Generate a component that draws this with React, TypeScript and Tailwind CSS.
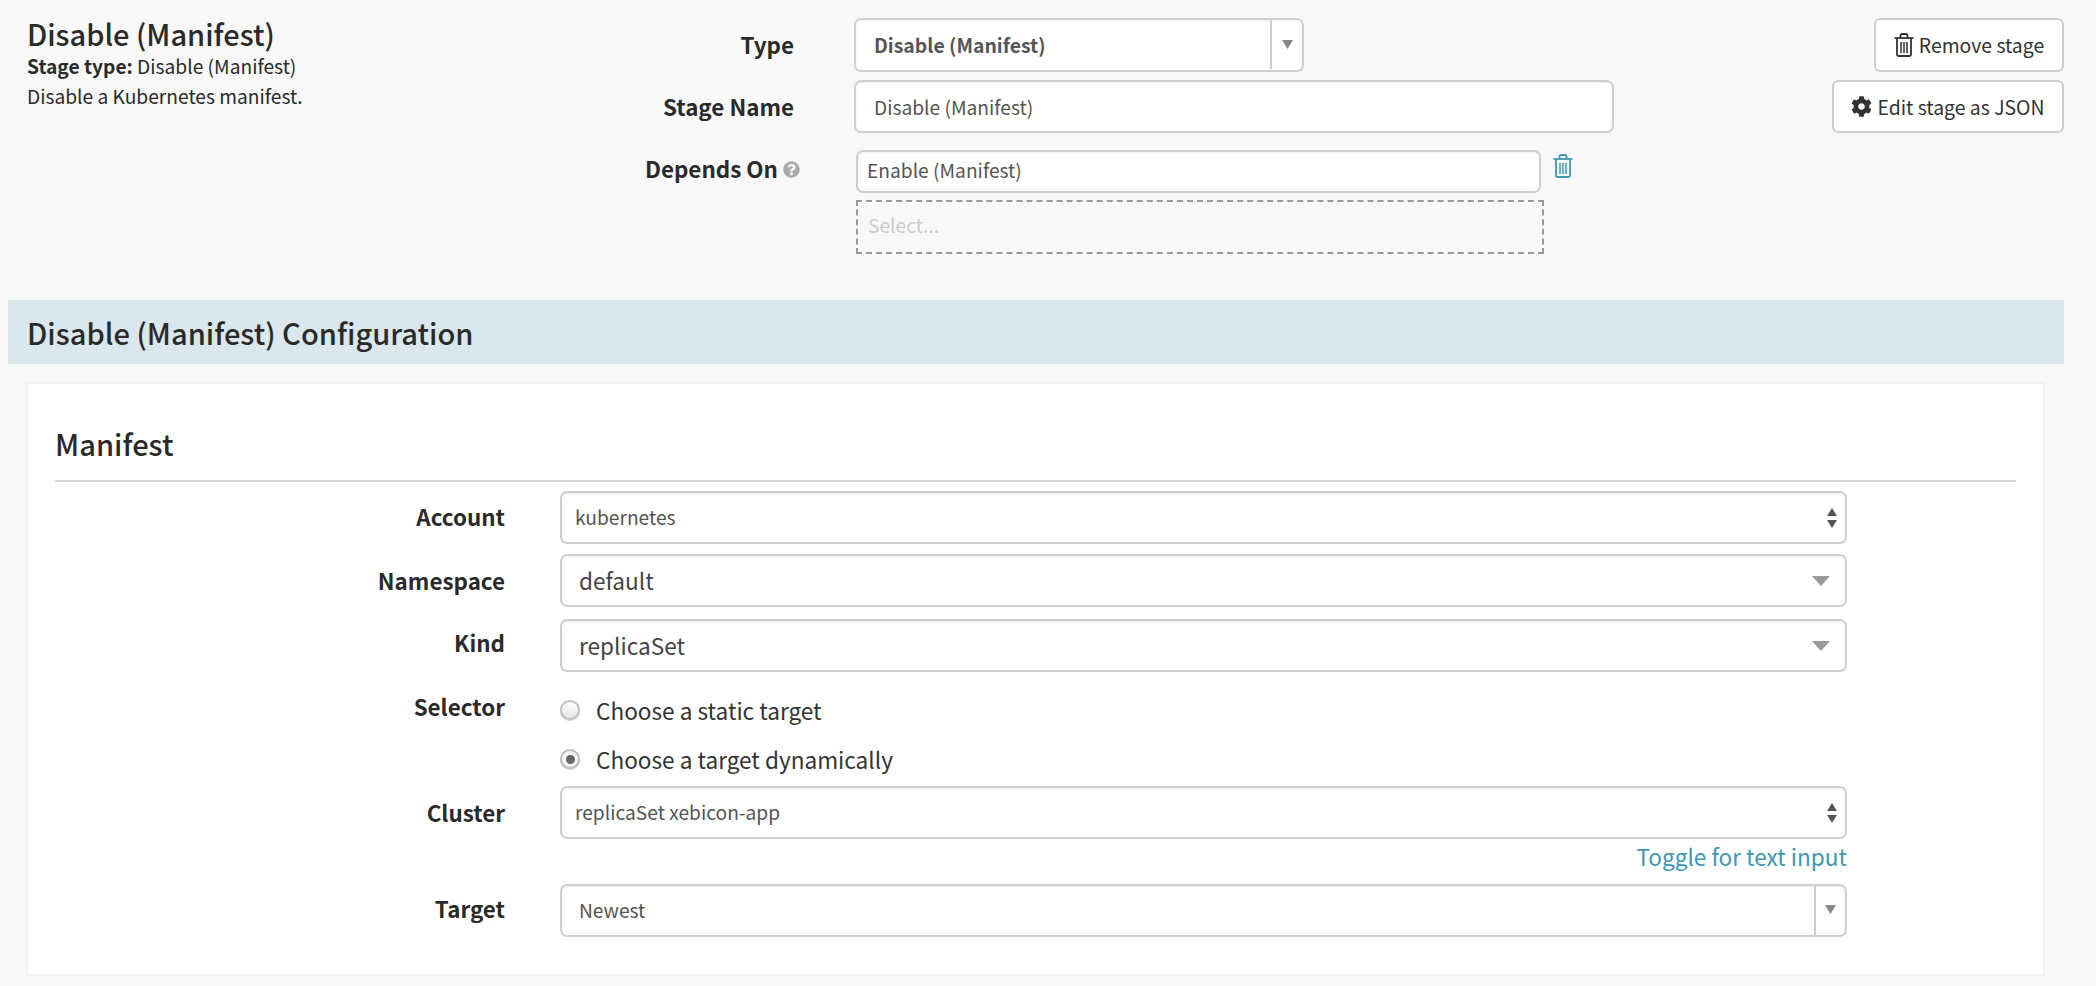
import React from 'react';
import { FaCog, FaQuestionCircle } from 'react-icons/fa';

const fontStack = "font-['Noto_Sans_CJK_SC','Liberation_Sans',sans-serif]";

function TrashIcon({ className }: { className?: string }) {
    return (
        <svg viewBox="0 0 20 24" fill="none" stroke="currentColor" strokeWidth="1.8" className={className}>
            <path d="M0.5 5H19.5" />
            <path d="M6.5 5V2.8C6.5 1.8 7.2 1 8.2 1H11.8C12.8 1 13.5 1.8 13.5 2.8V5" />
            <path d="M3 5V21.2C3 22.2 3.8 23 4.8 23H15.2C16.2 23 17 22.2 17 21.2V5" />
            <path d="M7 9V20M10 9V20M13 9V20" strokeWidth="1.5" />
        </svg>
    );
}

function Caret({ className }: { className?: string }) {
    return (
        <svg viewBox="0 0 10 10" preserveAspectRatio="none" fill="currentColor" className={className}>
            <path d="M0 0H10L5 10Z" />
        </svg>
    );
}

function Stepper() {
    return (
        <svg viewBox="0 0 10 20" fill="#555" className="h-[20px] w-[10px]">
            <path d="M5 0L10 8H0Z" />
            <path d="M0 12H10L5 20Z" />
        </svg>
    );
}

const boxClass =
    'flex items-center bg-white border-2 border-[#cfcfcf] rounded-[7px] shadow-[inset_0_1px_2px_rgba(0,0,0,0.08)]';

function HeaderLabel({ children }: { children: React.ReactNode }) {
    return <div className="w-[794px] shrink-0 text-right text-[22.4px] font-bold text-[#2a2a2a]">{children}</div>;
}

function FieldLabel({ children, className }: { children: React.ReactNode; className?: string }) {
    return (
        <div className={`w-[450px] shrink-0 text-right text-[22.4px] font-bold leading-[30px] text-[#2a2a2a] ${className ?? ''}`}>
            {children}
        </div>
    );
}

function StepperSelect({ value }: { value: string }) {
    return (
        <div className={`${boxClass} h-[53px] w-[1287px] justify-between pl-[13px] pr-[8px] text-[19.2px] text-[#555]`}>
            <span>{value}</span>
            <Stepper />
        </div>
    );
}

function CaretSelect({ value }: { value: string }) {
    return (
        <div className={`${boxClass} h-[53px] w-[1287px] justify-between pl-[17px] pr-[15px] text-[22.6px] text-[#444]`}>
            <span>{value}</span>
            <Caret className="h-[10px] w-[18px] text-[#999]" />
        </div>
    );
}

export default function App() {
    return (
        <div className={`h-[986px] w-[2096px] overflow-hidden bg-[#f8f8f8] ${fontStack}`}>
            {/* Stage header */}
            <div className="flex h-[300px] pt-[18px]">
                <div className="relative flex-1">
                    <div className="absolute left-[27px] top-[-2px] w-[400px] text-[#2a2a2a]">
                        <h1 className="text-[29px] font-medium leading-[35px]">Disable (Manifest)</h1>
                        <div className="text-[19.2px] leading-[30px]">
                            <b className="font-bold">Stage type:</b> Disable (Manifest)
                        </div>
                        <div className="text-[19.2px] leading-[30px]">Disable a Kubernetes manifest.</div>
                    </div>

                    <div className="flex h-[54px] items-center">
                        <HeaderLabel>Type</HeaderLabel>
                        <div className={`${boxClass} ml-[60px] h-[54px] w-[450px] pb-[1px] pl-[18px] text-[19.4px] font-bold text-[#555]`}>
                            <span className="flex-1">Disable (Manifest)</span>
                            <div className="flex h-full w-[32px] justify-center border-l-2 border-[#cfcfcf] pt-[20px]">
                                <Caret className="h-[9px] w-[11px] text-[#888]" />
                            </div>
                        </div>
                    </div>

                    <div className="mt-[8px] flex h-[53px] items-center">
                        <HeaderLabel>Stage Name</HeaderLabel>
                        <div className={`${boxClass} ml-[60px] h-[53px] w-[760px] pl-[18px] pt-[1px] text-[19.2px] text-[#555]`}>
                            Disable (Manifest)
                        </div>
                    </div>

                    <div className="mt-[17px] flex">
                        <div className="w-[800px] shrink-0 pt-[2px] text-right text-[22.4px] font-bold text-[#2a2a2a]">
                            Depends On <FaQuestionCircle className="inline-block h-[17px] w-[17px] align-[0px] text-[#aaa]" />
                        </div>
                        <div className="ml-[56px]">
                            <div className="flex">
                                <div className={`${boxClass} h-[43px] w-[685px] pb-[2px] pl-[9px] text-[19.2px] text-[#555]`}>Enable (Manifest)</div>
                                <TrashIcon className="ml-[12px] mt-[4px] h-[24px] w-[20px] text-[#3f97b3]" />
                            </div>
                            <div className="mt-[7px] flex h-[54px] w-[688px] items-center border-2 border-dashed border-[#999] pb-[4px] pl-[10px] text-[19.2px] text-[#ccc]">
                                Select...
                            </div>
                        </div>
                    </div>
                </div>

                <div className="flex w-[300px] shrink-0 flex-col items-end gap-[8px] pr-[32px]">
                    <button className="flex h-[54px] w-[190px] items-center justify-center gap-[5px] rounded-[6px] border-2 border-[#cfcfcf] bg-white text-[19.4px] text-[#333]">
                        <TrashIcon className="h-[24px] w-[20px]" />
                        Remove stage
                    </button>
                    <button className="flex h-[53px] w-[232px] items-center justify-center gap-[5px] rounded-[6px] border-2 border-[#cfcfcf] bg-white text-[19.4px] text-[#333]">
                        <FaCog className="h-[21px] w-[21px]" />
                        Edit stage as JSON
                    </button>
                </div>
            </div>

            {/* Configuration band */}
            <div className="ml-[8px] flex h-[64px] w-[2056px] items-center bg-[#dae7ed] pl-[19px] pt-[1px] text-[29.1px] font-medium text-[#2a2a2a]">
                Disable (Manifest) Configuration
            </div>

            {/* Manifest panel */}
            <div className="ml-[26px] mt-[18px] h-[594px] w-[2019px] border-2 border-[#f2f2f2] bg-white px-[27px]">
                <h2 className="h-[98px] border-b-2 border-[#d4d4d4] pt-[41px] text-[29.1px] font-medium leading-[36px] text-[#2a2a2a]">
                    Manifest
                </h2>

                <div className="mt-[9px] flex">
                    <FieldLabel className="pt-[10px]">Account</FieldLabel>
                    <div className="ml-[55px]">
                        <StepperSelect value="kubernetes" />
                    </div>
                </div>
                <div className="mt-[10px] flex">
                    <FieldLabel className="pt-[11px]">Namespace</FieldLabel>
                    <div className="ml-[55px]">
                        <CaretSelect value="default" />
                    </div>
                </div>
                <div className="mt-[12px] flex">
                    <FieldLabel className="pt-[8px]">Kind</FieldLabel>
                    <div className="ml-[55px]">
                        <CaretSelect value="replicaSet" />
                    </div>
                </div>

                <div className="mt-[17px] flex">
                    <FieldLabel className="pt-[2px]">Selector</FieldLabel>
                    <div className="ml-[55px] text-[22.6px] leading-[30px] text-[#333]">
                        <div className="flex items-center gap-[16px] pt-[5px]">
                            <span className="h-[20px] w-[20px] shrink-0 rounded-full border-2 border-[#bdbdbd] bg-[linear-gradient(#fff,#e6e6e6)] shadow-[0_1px_1px_rgba(0,0,0,0.2)]" />
                            <span className="pt-[2px]">Choose a static target</span>
                        </div>
                        <div className="mt-[17px] flex items-center gap-[16px]">
                            <span className="flex h-[20px] w-[20px] shrink-0 items-center justify-center rounded-full border-2 border-[#bdbdbd] bg-[#f4f4f4] shadow-[0_1px_1px_rgba(0,0,0,0.2)]">
                                <span className="h-[9px] w-[9px] rounded-full bg-[#666]" />
                            </span>
                            <span className="pt-[2px]">Choose a target dynamically</span>
                        </div>
                    </div>
                </div>

                <div className="mt-[11px] flex">
                    <FieldLabel className="pt-[11px]">Cluster</FieldLabel>
                    <div className="ml-[55px]">
                        <StepperSelect value="replicaSet xebicon-app" />
                        <div className="text-right text-[22.6px] leading-[35px] text-[#3f97b3]">Toggle for text input</div>
                    </div>
                </div>

                <div className="mt-[10px] flex">
                    <FieldLabel className="pt-[9px]">Target</FieldLabel>
                    <div className="ml-[55px]">
                        <div className={`${boxClass} h-[53px] w-[1287px] pl-[17px] text-[19.2px] text-[#555]`}>
                            <span className="flex-1">Newest</span>
                            <div className="flex h-full w-[31px] justify-center border-l-2 border-[#cfcfcf] pt-[19px]">
                                <Caret className="h-[9px] w-[11px] text-[#888]" />
                            </div>
                        </div>
                    </div>
                </div>
            </div>
        </div>
    );
}
